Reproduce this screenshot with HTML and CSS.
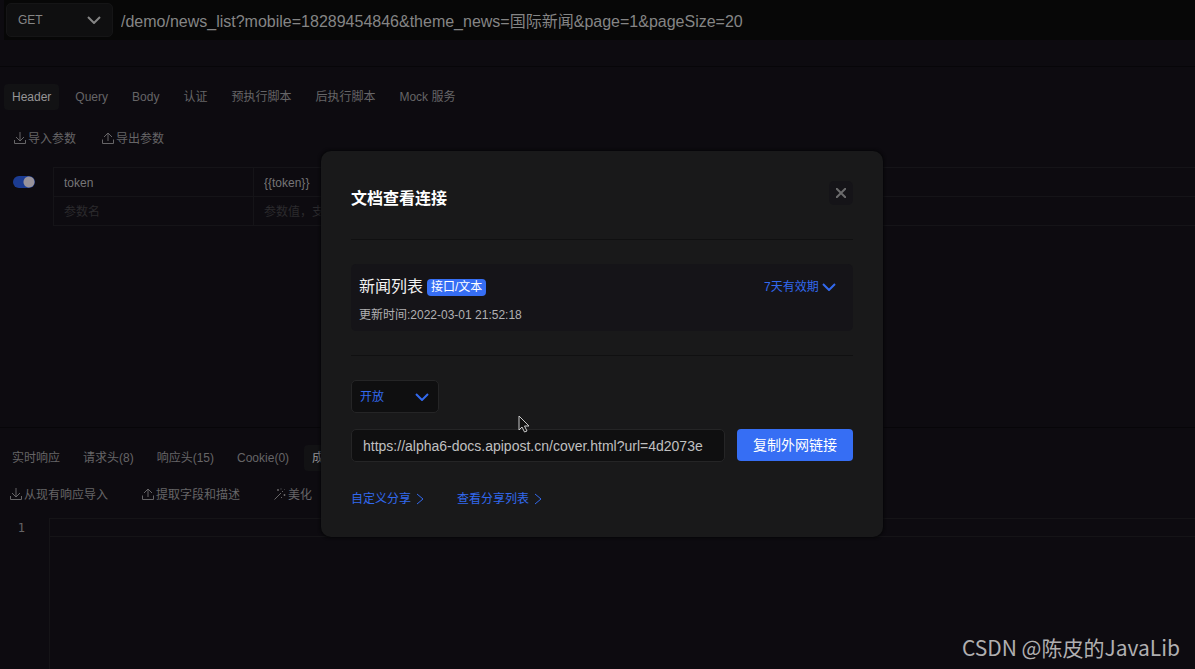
FILE: index.html
```html
<!DOCTYPE html>
<html lang="zh-CN">
<head>
<meta charset="utf-8">
<title>文档查看连接</title>
<link rel="stylesheet" href="styles.css">
</head>
<body>
<svg class="sprite" aria-hidden="true">
  <symbol id="chevron" viewBox="0 0 14 8"><path d="M1 1l6 6 6-6"/></symbol>
  <symbol id="right" viewBox="0 0 8 12"><path d="M1 1l6 5-6 5"/></symbol>
  <symbol id="import" viewBox="0 0 12 12"><path d="M6 0v8.500M2 5l4 4 4-4M.5 8v3.500h11V8"/></symbol>
  <symbol id="export" viewBox="0 0 12 12"><path d="M6 9V1M2 5l4-4 4 4M.5 7.500v4h11v-4"/></symbol>
  <symbol id="wand" viewBox="0 0 12 12"><path d="M.5 11.500L7 5M8 4l1-1M4 1v2M3 2h2M10.500 6v2M9.500 7h2M7 .5v1M11 1l-.5.5M7.500 9v1"/></symbol>
</svg>
<main class="app">
  <header class="request">
    <div class="select method">
      <select aria-label="请求方式"><option>GET</option><option>POST</option></select>
      <svg class="chevron"><use href="#chevron"/></svg>
    </div>
    <input class="request-url" type="text" aria-label="请求地址" value="/demo/news_list?mobile=18289454846&amp;theme_news=国际新闻&amp;page=1&amp;pageSize=20">
  </header>
  <section class="params">
    <nav class="tabs">
      <button class="tab active">Header</button>
      <button class="tab">Query</button>
      <button class="tab">Body</button>
      <button class="tab">认证</button>
      <button class="tab">预执行脚本</button>
      <button class="tab">后执行脚本</button>
      <button class="tab">Mock 服务</button>
    </nav>
    <div class="tools">
      <button class="tool"><svg><use href="#import"/></svg>导入参数</button>
      <button class="tool"><svg><use href="#export"/></svg>导出参数</button>
    </div>
    <div class="grid-area">
      <input class="switch" type="checkbox" role="switch" checked aria-label="启用 token">
      <table class="grid">
        <tr><td class="name"><input type="text" aria-label="参数名" value="token"></td><td><input type="text" aria-label="参数值" value="{{token}}"></td></tr>
        <tr><td class="name"><input type="text" aria-label="参数名" placeholder="参数名"></td><td><input type="text" aria-label="参数值" placeholder="参数值，支持变量"></td></tr>
      </table>
    </div>
  </section>
  <section class="response">
    <nav class="tabs tight">
      <button class="tab">实时响应</button>
      <button class="tab">请求头(8)</button>
      <button class="tab">响应头(15)</button>
      <button class="tab">Cookie(0)</button>
      <button class="tab active">成功响应示例</button>
    </nav>
    <div class="tools wide">
      <button class="tool"><svg><use href="#import"/></svg>从现有响应导入</button>
      <button class="tool"><svg><use href="#export"/></svg>提取字段和描述</button>
      <button class="tool"><svg><use href="#wand"/></svg>美化</button>
    </div>
    <div class="editor">
      <div class="gutter">1</div>
      <div class="code"><div class="line"></div></div>
    </div>
  </section>
</main>
<div class="overlay">
  <section class="dialog" role="dialog" aria-labelledby="dialog-title">
    <header class="dialog-head">
      <h1 id="dialog-title">文档查看连接</h1>
      <button class="close" aria-label="关闭"><svg viewBox="0 0 10 10"><path d="M0 0l10 10M10 0L0 10"/></svg></button>
    </header>
    <div class="doc-wrap">
      <div class="doc">
        <div>
          <h2>新闻列表<span class="tag">接口/文本</span></h2>
          <p>更新时间:2022-03-01 21:52:18</p>
        </div>
        <div class="select expiry">
          <select aria-label="有效期"><option>7天有效期</option></select>
          <svg class="chevron"><use href="#chevron"/></svg>
        </div>
      </div>
    </div>
    <div class="select access">
      <select aria-label="访问权限"><option>开放</option></select>
      <svg class="chevron"><use href="#chevron"/></svg>
    </div>
    <div class="share">
      <input type="text" aria-label="分享链接" readonly value="https://alpha6-docs.apipost.cn/cover.html?url=4d2073e">
      <button class="copy">复制外网链接</button>
    </div>
    <footer class="links">
      <a href="#">自定义分享<svg><use href="#right"/></svg></a>
      <a href="#">查看分享列表<svg><use href="#right"/></svg></a>
    </footer>
  </section>
</div>
<svg class="cursor" viewBox="0 0 12 18" aria-hidden="true"><path d="M1 1v14l3-3 2.500 5 2.500-1-2.500-5H11z"/></svg>
<div class="watermark">CSDN @陈皮的JavaLib</div>
</body>
</html>
```

FILE: styles.css
```css
* { box-sizing: border-box; }

body {
  margin: 0;
  background: #0d0b10;
  color: #666567;
  font: 12px/18px "Liberation Sans", "Noto Sans CJK SC", sans-serif;
}

button, input, select { font: inherit; color: inherit; background: none; border: 0; padding: 0; margin: 0; min-width: 0; }
input:focus, select:focus { outline: none; }
button, select { cursor: pointer; }
svg { flex: none; fill: none; stroke: currentColor; }
.sprite { position: absolute; width: 0; height: 0; }

.app { height: 100vh; display: flex; flex-direction: column; overflow: hidden; }

.select { position: relative; display: flex; }
.select select { appearance: none; width: 100%; }
.chevron { position: absolute; right: 11px; top: 50%; width: 14px; height: 8px; margin-top: -4px; stroke-width: 2; pointer-events: none; }

.request { display: flex; align-items: center; gap: 8px; height: 40px; margin-left: 4px; padding-left: 2px; background: #070707; }
.method { width: 107px; height: 34px; border: 1px solid #151516; border-radius: 5px; background: #0f0f10; color: #858585; }
.method select { padding: 0 11px; }
.request-url { flex: 1; height: 32px; font-size: 16px; color: #858585; }

.params { margin-top: 26px; padding-top: 17px; border-top: 1px solid #070609; height: 361px; }
.tabs { display: flex; gap: 8px; padding-left: 4px; }
.tabs.tight { gap: 7px; }
.tab { height: 26px; padding: 0 8px; border-radius: 4px; white-space: nowrap; }
.tab.active { background: #121214; color: #969596; }

.tools { display: flex; gap: 26px; padding: 20px 14px 0; }
.tool { display: flex; align-items: center; gap: 2px; height: 18px; white-space: nowrap; }
.tool svg { width: 12px; height: 12px; margin-bottom: 2px; }
.tools.wide { gap: 34px; padding: 15px 10px 0; }

.grid-area { display: flex; align-items: flex-start; gap: 18px; margin-top: 19px; padding-left: 13px; }
.switch { appearance: none; width: 22px; height: 12px; margin-top: 9px; border-radius: 6px; background: radial-gradient(circle at 16px 6px, #98939a 5px, #1c3c92 6px); }
.grid { flex: 1; border-collapse: collapse; table-layout: fixed; }
.grid td { height: 29px; padding: 1px 0 0 10px; border: 1px solid #151418; border-right: 0; }
.grid .name { width: 200px; }
.grid input { display: block; width: 100%; color: #767577; }
.grid input::placeholder { color: #2b2a2d; opacity: 1; }

.response { flex: 1; display: flex; flex-direction: column; padding-top: 17px; border-top: 1px solid #070609; }
.editor { flex: 1; display: flex; margin-top: 14px; }
.gutter { width: 49px; padding: 1px 24px 0 0; text-align: right; font-family: "DejaVu Sans Mono", monospace; color: #656466; }
.code { flex: 1; border-left: 1px solid #151417; }
.line { height: 19px; border: 1px solid #151417; border-width: 1px 0; }

.overlay { position: absolute; inset: 0; display: flex; justify-content: center; align-items: flex-start; padding: 151px 0 0 9px; }
.dialog { width: 562px; padding: 0 30px 29px; border-radius: 10px; background: #19191a; box-shadow: 0 0 3px 1px #060608; }
.dialog-head { display: flex; justify-content: space-between; align-items: flex-start; height: 89px; padding-top: 30px; border-bottom: 1px solid #101011; }
.dialog-head h1 { margin: 6px 0 0; font-size: 16px; line-height: 24px; font-weight: 700; color: #fff; }
.close { display: flex; align-items: center; justify-content: center; width: 24px; height: 24px; border-radius: 5px; background: #151418; color: #6b6b6c; }
.close svg { width: 10px; height: 10px; stroke-width: 2; }
.doc-wrap { padding: 24px 0; border-bottom: 1px solid #101011; }
.doc { display: flex; justify-content: space-between; align-items: flex-start; height: 67px; padding: 11px 8px; border-radius: 5px; background: #151418; }
.doc h2 { display: flex; align-items: center; gap: 4px; margin: 0; font-size: 16px; line-height: 24px; font-weight: 400; color: #f2f2f2; }
.tag { padding: 0 4px; border-radius: 4px; background: #366ef4; color: #fff; font-size: 12px; line-height: 17px; }
.doc p { margin: 7px 0 0; color: #b1b0b2; }
.expiry { margin: 3px 9px 0 0; color: #3269ee; }
.expiry select { padding-right: 17px; }
.expiry .chevron { right: 0; }
.access { width: 88px; height: 33px; margin-top: 24px; border: 1px solid #252526; border-radius: 5px; background: #0f0f10; color: #3269ee; }
.access select { padding: 0 8px; }
.access .chevron { right: 9px; }
.share { display: flex; gap: 12px; margin-top: 16px; }
.share input { flex: 1; height: 33px; padding: 0 11px; border: 1px solid #252526; border-radius: 5px; background: #0f0f10; color: #c0c0c0; font-size: 14px; }
.copy { height: 32px; padding: 0 16px; border-radius: 4px; background: #366ef4; color: #fff; font-size: 14px; }
.links { display: flex; gap: 33px; margin-top: 28px; }
.links a { display: flex; align-items: center; gap: 5px; color: #3269ee; text-decoration: none; }
.links svg { width: 8px; height: 12px; }

.cursor { position: absolute; left: 518px; top: 415px; width: 12px; height: 18px; fill: #111; stroke: #c8c8c8; stroke-width: 1; }
.watermark { position: absolute; right: 15px; bottom: 6px; font: 21px/32px "Noto Sans CJK SC", sans-serif; color: #b0afb0; }
```
